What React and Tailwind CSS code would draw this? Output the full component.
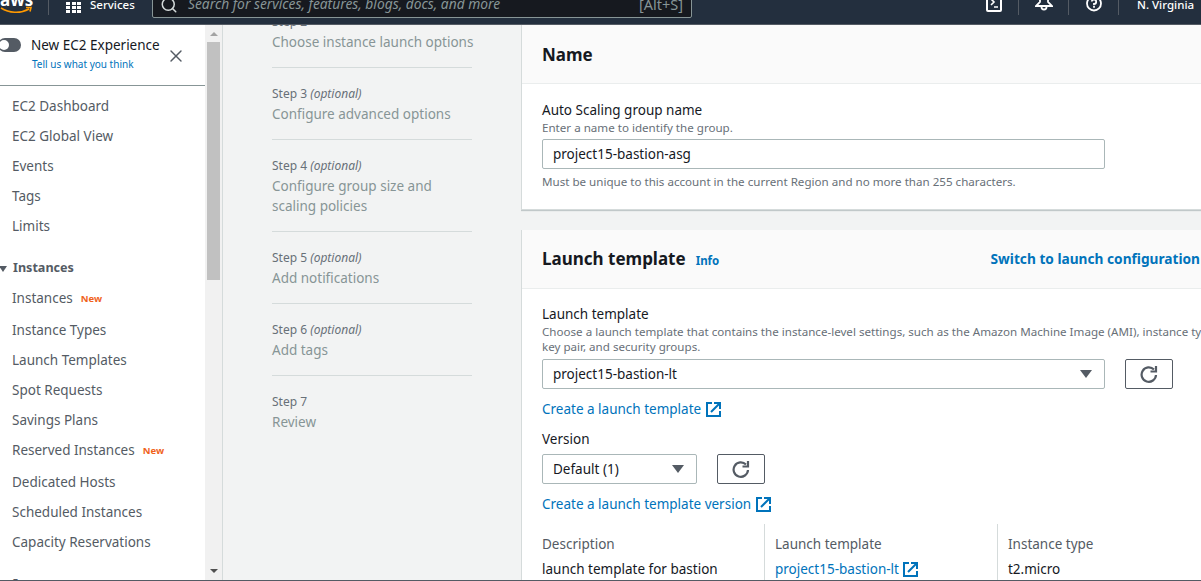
import {Search, X} from 'lucide-react';

const font = {fontFamily: '"Noto Sans", sans-serif'};

function ExternalIcon ()
{
    return (
        <svg width="15" height="15" viewBox="0 0 15 15" fill="none" stroke="#0073bb" strokeWidth="2" className="flex-none">
            <path d="M6 1H1v13h13V9" />
            <path d="M5 10 13 2M8 1h6v6" />
        </svg>
    );
}

function RefreshIcon ()
{
    return (
        <svg width="18" height="17" viewBox="0 0 18 17" fill="none" stroke="#545b64" strokeWidth="2.2">
            <path d="M14 3.6A7.2 7.2 0 1 0 16 9" />
            <path d="M16 0v5.5h-5.5" />
        </svg>
    );
}

function Caret ()
{
    return (
        <svg width="12" height="8" viewBox="0 0 12 8" className="flex-none">
            <path d="M0 0h12L6 8z" fill="#545b64" />
        </svg>
    );
}

function RefreshButton ()
{
    return (
        <button className="w-[48px] h-[30px] flex-none flex items-center justify-center bg-white border border-[#545b64] rounded-[2px]">
            <RefreshIcon />
        </button>
    );
}

function Select ({value, className})
{
    return (
        <div className={`h-[30px] flex items-center justify-between pl-[10px] pr-[12px] border border-[#aab7b8] rounded-[2px] bg-white text-[13.5px] text-[#16191f] ${className}`}>
            <span>{value}</span>
            <Caret />
        </div>
    );
}

function NavIcons ()
{
    return (
        <div className="flex h-[15px]">
            <div className="w-[50px] h-[15px] flex items-end justify-center pb-[3px] border-r border-[#545b64]">
                <svg width="16" height="16" viewBox="0 0 16 16" fill="none" stroke="white" strokeWidth="2">
                    <rect x="1" y="-4" width="14" height="19" rx="1" />
                    <path d="m5 3 3 3-3 3M8 11h4" strokeWidth="1.6" />
                </svg>
            </div>
            <div className="w-[50px] h-[15px] flex items-end justify-center pb-[3px] border-r border-[#545b64]">
                <svg width="18" height="16" viewBox="0 0 18 16" fill="none" stroke="white" strokeWidth="1.8">
                    <path d="M5 0v6l-4 4h16l-4-4V0" />
                    <path d="M6.5 11a2.5 2.5 0 0 0 5 0" />
                </svg>
            </div>
            <div className="w-[50px] h-[15px] flex items-end justify-center pb-[3px] border-r border-[#545b64]">
                <svg width="16" height="16" viewBox="0 0 16 16" fill="none" stroke="white" strokeWidth="1.8">
                    <circle cx="8" cy="7.5" r="7" />
                    <path d="M5.8 5.5A2.2 2.2 0 1 1 8 8v1.2M8 10v1.8" />
                </svg>
            </div>
        </div>
    );
}

function TopBar ()
{
    return (
        <div className="h-[25px] flex-none flex bg-[#232f3e] border-b border-[#545b64] overflow-hidden text-white">
            <div className="w-[49px] h-[15px] flex-none relative border-r border-[#545b64]">
                <span className="absolute left-[0px] -top-[10px] text-[17px] font-bold leading-[20px]">aws</span>
                <svg width="34" height="9" viewBox="0 0 34 9" className="absolute left-[0px] top-[6px]" fill="none" stroke="#ff9900" strokeWidth="1.6">
                    <path d="M1 2c8 5 19 6 28 1M26 1.5l5 0-1 4" />
                </svg>
            </div>
            <div className="w-[103px] flex-none flex gap-[9px] pl-[17px]">
                <div className="grid grid-cols-3 gap-x-[1.5px] gap-y-[1px] w-[15px] h-[11px] mt-[2px]">
                    {Array.from({length: 9}).map((_, i) => <span key={i} className="w-[4px] h-[3px] bg-white" />)}
                </div>
                <span className="text-[11.5px] font-medium leading-[10px] whitespace-nowrap">Services</span>
            </div>
            <div className="w-[540px] h-[19px] -mt-[1px] flex-none flex items-center justify-between pl-[7px] pr-[8px] bg-[#16191f] border border-[#879596] rounded-b-[2px] text-[13.8px] italic text-[#879596]">
                <div className="flex items-center gap-[10px] -mt-[8px]">
                    <Search size={18} strokeWidth={2} className="text-[#d5dbdb]" />
                    <span className="whitespace-nowrap">Search for services, features, blogs, docs, and more</span>
                </div>
                <span className="not-italic -mt-[8px] text-[14.5px]">[Alt+S]</span>
            </div>
            <div className="flex-1" />
            <NavIcons />
            <span className="w-[82px] flex-none pl-[18px] text-[11.5px] font-medium leading-[10px] whitespace-nowrap">N. Virginia</span>
        </div>
    );
}

const group1 = ['EC2 Dashboard', 'EC2 Global View', 'Events', 'Tags', 'Limits'];
const group2 = [
    {name: 'Instances', isNew: true},
    {name: 'Instance Types'},
    {name: 'Launch Templates'},
    {name: 'Spot Requests'},
    {name: 'Savings Plans'},
    {name: 'Reserved Instances', isNew: true},
    {name: 'Dedicated Hosts'},
    {name: 'Scheduled Instances'},
    {name: 'Capacity Reservations'},
];

function SideHeading ({children, className})
{
    return (
        <div className={`relative h-[29px] flex items-center font-bold text-[12.6px] text-[#545b64] ${className}`}>
            <span className="absolute -left-[13px] top-[12px] border-x-[4px] border-x-transparent border-t-[6px] border-t-[#545b64]" />
            <span className="pl-[1px]">{children}</span>
        </div>
    );
}

function Sidebar ()
{
    return (
        <div className="w-[205px] flex-none bg-white overflow-hidden">
            <div className="h-[61px] border-b border-[#879596] flex">
                <div className="w-[26px] flex-none pt-[13px]">
                    <div className="w-[23px] h-[14px] -ml-[2px] rounded-full bg-[#545b64] relative">
                        <span className="absolute left-[1px] top-[2px] w-[10px] h-[10px] rounded-full bg-white" />
                    </div>
                </div>
                <div className="pl-[5px] w-[138px] flex-none">
                    <div className="text-[13.5px] text-[#16191f] leading-[20px] mt-[10px] whitespace-nowrap">New EC2 Experience</div>
                    <div className="text-[10px] text-[#0073bb] leading-[14px] mt-[2px] ml-[1px] whitespace-nowrap">Tell us what you think</div>
                </div>
                <X size={20} strokeWidth={1.7} className="text-[#545b64] mt-[21px] ml-[2px]" />
            </div>
            <div className="pl-[12px] pt-[5px] text-[13.5px] text-[#545b64]">
                {group1.map(n => <div key={n} className="h-[30px] flex items-center">{n}</div>)}
                <SideHeading className="mt-[13px]">Instances</SideHeading>
                {group2.map(item => (
                    <div key={item.name} className={`${item.isNew ? 'h-[32px]' : 'h-[30px]'} flex items-center`}>
                        <span className={item.isNew ? '-mt-[2px]' : ''}>{item.name}</span>
                        {item.isNew && <span className="ml-[8px] text-[9.5px] font-bold text-[#f0631c]">New</span>}
                    </div>
                ))}
                <SideHeading className="mt-[13px]">Images</SideHeading>
            </div>
        </div>
    );
}

function Scrollbar ()
{
    return (
        <div className="w-[18px] flex-none bg-[#f1f1f1] border-r border-[#d5dbdb] flex flex-col items-center">
            <span className="mt-[7px] border-x-[4px] border-x-transparent border-b-[4px] border-b-[#a3a3a3]" />
            <div className="w-[13px] h-[238px] mt-[6px] bg-[#c1c1c1]" />
            <div className="flex-1" />
            <span className="mb-[7px] border-x-[4px] border-x-transparent border-t-[4px] border-t-[#505050]" />
        </div>
    );
}

const steps = [
    {label: 'Step 2', desc: ['Choose instance launch options'], first: true},
    {label: 'Step 3', optional: true, desc: ['Configure advanced options']},
    {label: 'Step 4', optional: true, desc: ['Configure group size and', 'scaling policies']},
    {label: 'Step 5', optional: true, desc: ['Add notifications']},
    {label: 'Step 6', optional: true, desc: ['Add tags']},
    {label: 'Step 7', desc: ['Review'], last: true},
];

function Steps ()
{
    return (
        <div className="w-[200px] flex-none -mt-[13px]">
            {steps.map(s => (
                <div key={s.label} className={`${s.first ? '' : 'pt-[16px]'} pb-[15px] ${s.last ? '' : 'border-b border-[#d5dbdb]'}`}>
                    <div className="text-[12px] leading-[20px] text-[#687078]">
                        {s.label} {s.optional && <i>(optional)</i>}
                    </div>
                    {s.desc.map(d => <div key={d} className="text-[13.5px] leading-[20px] text-[#879596] whitespace-nowrap">{d}</div>)}
                </div>
            ))}
        </div>
    );
}

function NameCard ()
{
    return (
        <div className="bg-white border-l border-b border-[#d5dbdb] shadow-[0_1px_1px_rgba(0,28,36,0.2)]">
            <div className="h-[59px] flex items-center pl-[20px] pt-[1px] bg-[#fafafa] border-b border-[#eaeded] text-[17px] font-bold text-[#16191f]">Name</div>
            <div className="h-[125px] pl-[20px] pt-[16px]">
                <div className="text-[13.5px] leading-[20px] text-[#16191f]">Auto Scaling group name</div>
                <div className="text-[11.6px] leading-[15px] text-[#687078]">Enter a name to identify the group.</div>
                <div className="w-[563px] h-[30px] mt-[4px] flex items-center pl-[10px] border border-[#aab7b8] rounded-[2px] text-[13.5px] text-[#16191f]">project15-bastion-asg</div>
                <div className="text-[11.6px] leading-[16px] text-[#687078] mt-[5px]">Must be unique to this account in the current Region and no more than 255 characters.</div>
            </div>
        </div>
    );
}

function LinkRow ({children})
{
    return (
        <div className="flex items-center gap-[5px] h-[20px] text-[13.5px] text-[#0073bb]">
            <span>{children}</span>
            <ExternalIcon />
        </div>
    );
}

function TemplateCard ()
{
    return (
        <div className="bg-white border-l border-[#d5dbdb] mt-[20px]">
            <div className="h-[59px] flex items-center justify-between pl-[20px] pr-[1px] bg-[#fafafa] border-b border-[#eaeded]">
                <div className="flex items-baseline gap-[10px]">
                    <span className="text-[17px] font-bold text-[#16191f]">Launch template</span>
                    <span className="text-[11.5px] font-bold text-[#0073bb]">Info</span>
                </div>
                <span className="text-[13.7px] font-bold text-[#0073bb] whitespace-nowrap">Switch to launch configuration</span>
            </div>
            <div className="pl-[20px] pt-[15px]">
                <div className="text-[13.5px] leading-[20px] text-[#16191f]">Launch template</div>
                <div className="text-[11.6px] leading-[15px] text-[#687078] whitespace-nowrap">
                    Choose a launch template that contains the instance-level settings, such as the Amazon Machine Image (AMI), instance type,<br />
                    key pair, and security groups.
                </div>
                <div className="flex gap-[20px] mt-[5px]">
                    <Select value="project15-bastion-lt" className="w-[563px]" />
                    <RefreshButton />
                </div>
                <div className="mt-[10px]"><LinkRow>Create a launch template</LinkRow></div>
                <div className="text-[13.5px] leading-[20px] text-[#16191f] mt-[10px]">Version</div>
                <div className="flex gap-[20px] mt-[5px]">
                    <Select value="Default (1)" className="w-[155px]" />
                    <RefreshButton />
                </div>
                <div className="mt-[10px]"><LinkRow>Create a launch template version</LinkRow></div>
                <div className="flex mt-[10px] h-[60px] text-[13.5px] leading-[20px]">
                    <div className="w-[222px] flex-none pt-[10px]">
                        <div className="text-[#545b64]">Description</div>
                        <div className="text-[#16191f] mt-[5px]">launch template for bastion</div>
                    </div>
                    <div className="w-[233px] flex-none pl-[10px] pt-[10px] border-l border-[#d5dbdb]">
                        <div className="text-[#545b64]">Launch template</div>
                        <div className="flex items-center gap-[4px] text-[#0073bb] mt-[5px]">project15-bastion-lt <ExternalIcon /></div>
                    </div>
                    <div className="flex-1 pl-[10px] pt-[10px] border-l border-[#d5dbdb]">
                        <div className="text-[#545b64]">Instance type</div>
                        <div className="text-[#16191f] mt-[5px]">t2.micro</div>
                    </div>
                </div>
            </div>
        </div>
    );
}

export default function App ()
{
    return (
        <div style={font} className="w-[1201px] h-[581px] flex flex-col overflow-hidden bg-[#f2f3f3] border-b border-[#545b64]">
            <TopBar />
            <div className="flex-1 flex min-h-0 overflow-hidden">
                <Sidebar />
                <Scrollbar />
                <div className="flex-1 flex min-w-0 pl-[49px]">
                    <Steps />
                    <div className="ml-[49px] flex-1 min-w-0 overflow-hidden">
                        <NameCard />
                        <TemplateCard />
                    </div>
                </div>
            </div>
        </div>
    );
}
